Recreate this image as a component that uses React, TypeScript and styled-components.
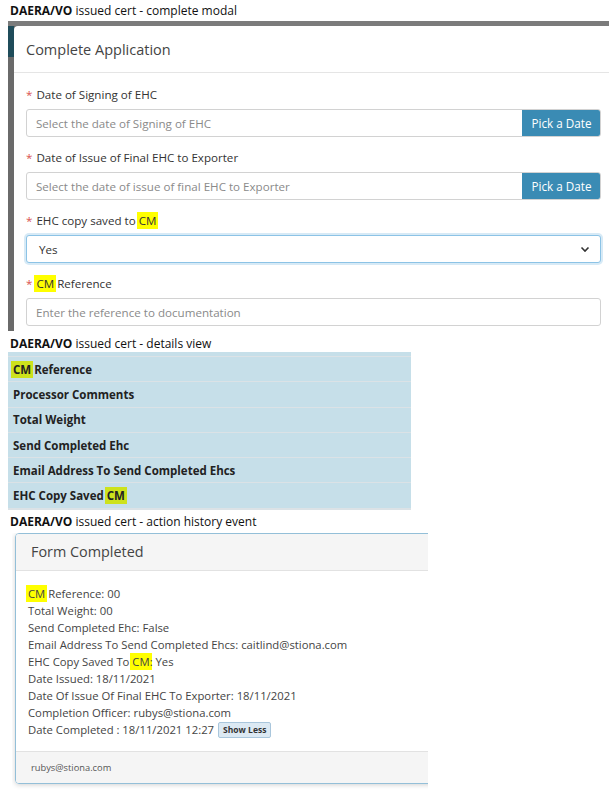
import React from 'react'
import styled, { createGlobalStyle } from 'styled-components'

const GlobalStyle = createGlobalStyle`
    body {
        margin: 0;
        background: #ffffff;
        font-family: "Open Sans", "Noto Sans", sans-serif;
        color: #333333;
    }
`

const Page = styled.div`
    width: 609px;
    display: flex;
    flex-direction: column;
`

// Caption above each screenshot
const Caption = styled.div<{ $top: number; $height: number }>`
    font-size: 12px;
    line-height: 16px;
    padding: ${({ $top }) => $top}px 0 0 10px;
    height: ${({ $height }) => $height}px;
    box-sizing: border-box;
    color: #111;
    b {
        font-weight: 700;
    }
`

const Mark = styled.span<{ tint?: string }>`
    background: ${({ tint }) => tint || '#ffff00'};
    padding: 1px 2px;
    margin: 0 -2px;
`

// ---- complete modal ----
const Backdrop = styled.div`
    margin-left: 8px;
    height: 310px;
    overflow: hidden;
    display: flex;
    padding: 5px 0 0 6px;
    box-sizing: border-box;
    background: linear-gradient(to bottom, #7b7b7b 0, #7b7b7b 5px, transparent 5px),
        linear-gradient(to right, #1f4c5a 0, #1f4c5a 6px, transparent 6px) 0 0 / 100% 36px no-repeat,
        #6a6a6a;
`

const Modal = styled.div`
    flex: none;
    width: 640px;
    background: #ffffff;
    border-radius: 4px 4px 0 0;
`

const ModalHeader = styled.div`
    height: 46px;
    display: flex;
    align-items: center;
    padding-left: 12px;
    font-size: 14.5px;
    color: #444;
    border-bottom: 1px solid #e5e5e5;
`

const ModalBody = styled.div`
    padding: 13px 0 0 12px;
    width: 575px;
`

const FieldGroup = styled.div`
    margin-bottom: 12px;
`

const Label = styled.div`
    font-size: 11.6px;
    line-height: 17px;
    margin-bottom: 6px;
    color: #333;
    &::before {
        content: '*';
        color: #d9534f;
        margin-right: 4px;
    }
`

const InputRow = styled.div<{ focused?: boolean }>`
    display: flex;
    height: 28px;
    box-sizing: border-box;
    border: 1px solid ${({ focused }) => (focused ? '#8cc3e6' : '#d2d2d2')};
    border-radius: 3px;
    box-shadow: ${({ focused }) => (focused ? '0 0 0 2px rgba(140, 195, 230, 0.35)' : 'none')};
    overflow: hidden;
    background: #fff;
`

const Field = styled.div<{ muted?: boolean }>`
    flex: 1;
    display: flex;
    align-items: center;
    justify-content: space-between;
    padding: 0 10px 0 ${({ muted }) => (muted ? '9px' : '12px')};
    font-size: 11.6px;
    color: ${({ muted }) => (muted ? '#8a8a8a' : '#333')};
`

const PickButton = styled.div`
    width: 79px;
    display: flex;
    align-items: center;
    justify-content: center;
    margin: -1px -1px -1px 0;
    background: #3a8bb4;
    color: #ffffff;
    font-size: 11.7px;
`

// ---- details view ----
const DetailsTable = styled.div`
    margin-left: 8px;
    width: 403px;
    padding-top: 4px;
    background: #c6dfe9;
    border-bottom: 2px solid #dbe2e6;
`

const DetailsRow = styled.div`
    height: 24.3px;
    display: flex;
    align-items: center;
    padding-left: 5px;
    border-top: 1px solid #dbe2e6;
    font-size: 11.5px;
    font-weight: 700;
    color: #222;
`

// ---- action history event ----
const CardCrop = styled.div`
    margin-left: 12px;
    width: 416px;
    overflow: hidden;
    padding: 0 0 8px 3px;
    box-sizing: border-box;
`

const Card = styled.div`
    width: 460px;
    border: 1px solid #93bfd8;
    border-radius: 4px;
    box-shadow: 0 1px 5px rgba(0, 0, 0, 0.18);
    overflow: hidden;
`

const CardHeader = styled.div`
    height: 36px;
    display: flex;
    align-items: center;
    padding-left: 15px;
    background: #f5f5f5;
    border-bottom: 1px solid #e2e2e2;
    font-size: 14.4px;
    color: #444;
`

const CardBody = styled.div`
    padding: 14px 0 13px 12px;
    background: #ffffff;
    font-size: 11.3px;
    line-height: 17px;
    color: #444;
`

const ShowLess = styled.span`
    display: inline-block;
    margin-left: 4px;
    padding: 0 4px;
    height: 14px;
    line-height: 14px;
    vertical-align: 1px;
    border: 1px solid #a9c6dc;
    border-radius: 2px;
    background: #dce9f3;
    font-size: 8.5px;
    font-weight: 700;
    color: #333;
`

const CardFooter = styled.div`
    height: 31px;
    display: flex;
    align-items: center;
    padding-left: 15px;
    background: #f5f5f5;
    border-top: 1px solid #e2e2e2;
    font-size: 9.3px;
    color: #555;
`

const Chevron = () => (
    <svg width="10" height="7" viewBox="0 0 10 7">
        <path d="M1.5 1.5 L5 5 L8.5 1.5" fill="none" stroke="#333" strokeWidth="1.6" />
    </svg>
)

const details = ['Processor Comments', 'Total Weight', 'Send Completed Ehc', 'Email Address To Send Completed Ehcs']

const App: React.FunctionComponent = () => {
    return (
        <Page>
            <GlobalStyle />
            <Caption $top={3} $height={21}><b>DAERA/VO</b> issued cert - complete modal</Caption>
            <Backdrop>
                <Modal>
                    <ModalHeader>Complete Application</ModalHeader>
                    <ModalBody>
                        <FieldGroup>
                            <Label>Date of Signing of EHC</Label>
                            <InputRow>
                                <Field muted>Select the date of Signing of EHC</Field>
                                <PickButton>Pick a Date</PickButton>
                            </InputRow>
                        </FieldGroup>
                        <FieldGroup>
                            <Label>Date of Issue of Final EHC to Exporter</Label>
                            <InputRow>
                                <Field muted>Select the date of issue of final EHC to Exporter</Field>
                                <PickButton>Pick a Date</PickButton>
                            </InputRow>
                        </FieldGroup>
                        <FieldGroup>
                            <Label>EHC copy saved to <Mark>CM</Mark></Label>
                            <InputRow focused>
                                <Field>Yes<Chevron /></Field>
                            </InputRow>
                        </FieldGroup>
                        <FieldGroup>
                            <Label><Mark>CM</Mark> Reference</Label>
                            <InputRow>
                                <Field muted>Enter the reference to documentation</Field>
                            </InputRow>
                        </FieldGroup>
                    </ModalBody>
                </Modal>
            </Backdrop>

            <Caption $top={5} $height={21}><b>DAERA/VO</b> issued cert - details view</Caption>
            <DetailsTable>
                <DetailsRow><Mark tint="#cde21c">CM</Mark>&nbsp;Reference</DetailsRow>
                {details.map((item, index) => (
                    <DetailsRow key={index}>{item}</DetailsRow>
                ))}
                <DetailsRow>EHC Copy Saved&nbsp;<Mark tint="#cde21c">CM</Mark></DetailsRow>
            </DetailsTable>

            <Caption $top={4} $height={23}><b>DAERA/VO</b> issued cert - action history event</Caption>
            <CardCrop>
                <Card>
                    <CardHeader>Form Completed</CardHeader>
                    <CardBody>
                        <div><Mark>CM</Mark> Reference: 00</div>
                        <div>Total Weight: 00</div>
                        <div>Send Completed Ehc: False</div>
                        <div>Email Address To Send Completed Ehcs: caitlind@stiona.com</div>
                        <div>EHC Copy Saved To <Mark>CM</Mark>: Yes</div>
                        <div>Date Issued: 18/11/2021</div>
                        <div>Date Of Issue Of Final EHC To Exporter: 18/11/2021</div>
                        <div>Completion Officer: rubys@stiona.com</div>
                        <div>Date Completed : 18/11/2021 12:27<ShowLess>Show Less</ShowLess></div>
                    </CardBody>
                    <CardFooter>rubys@stiona.com</CardFooter>
                </Card>
            </CardCrop>
        </Page>
    )
}

export default App
